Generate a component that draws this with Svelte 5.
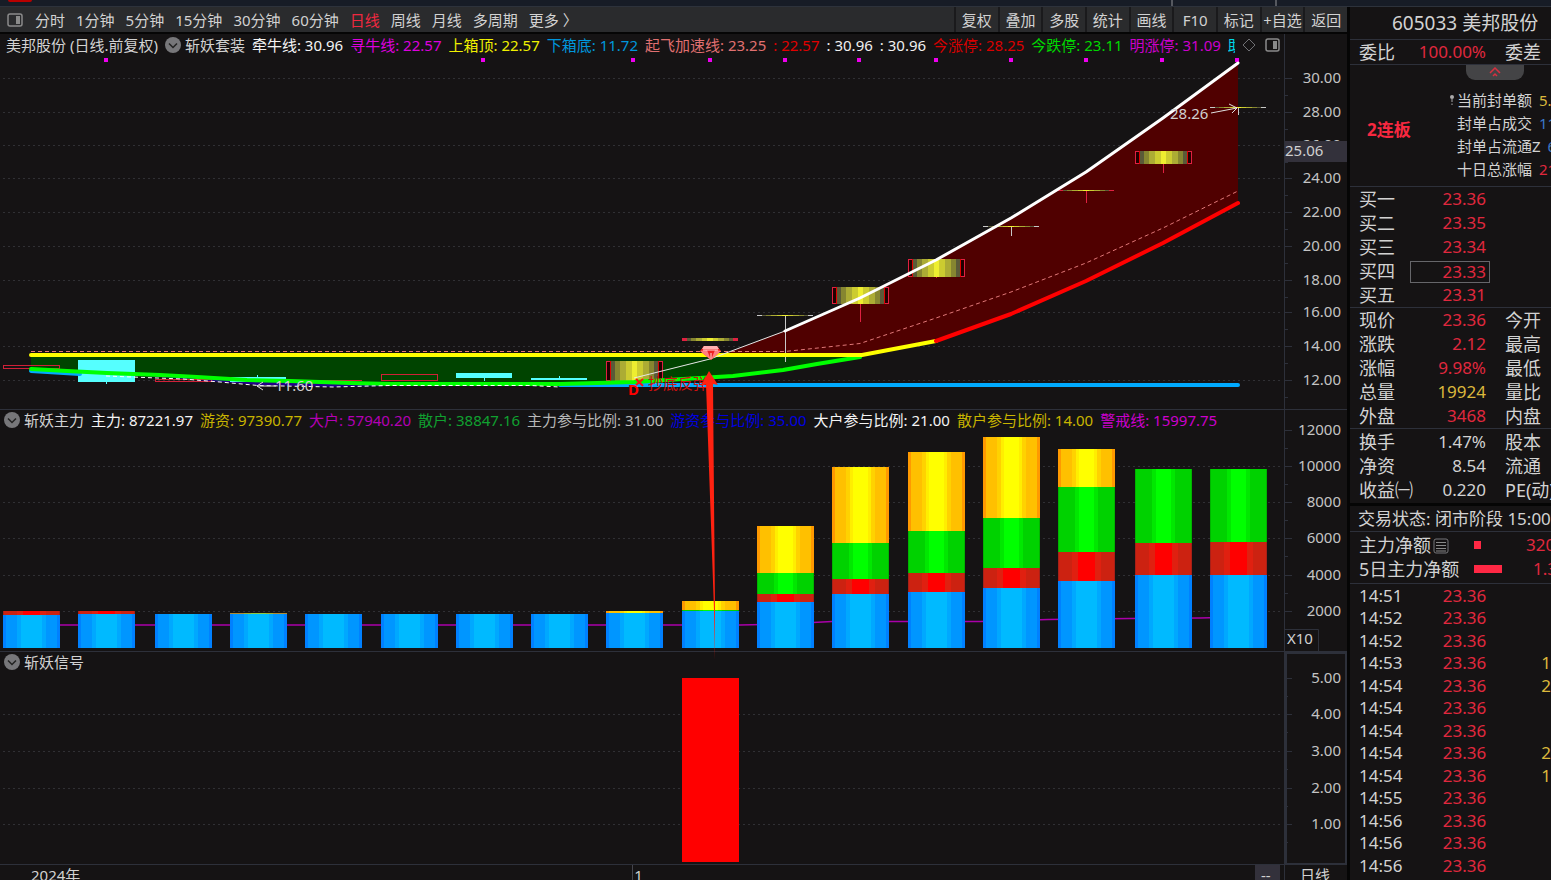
<script lang="ts">
    const periods = ["分时", "1分钟", "5分钟", "15分钟", "30分钟", "60分钟", "日线", "周线", "月线", "多周期", "更多 〉"];
    const tools = ["复权", "叠加", "多股", "统计", "画线", "F10", "标记", "+自选", "返回"];

    let period = $state("日线");

    const mainLegend = [
        { text: "牵牛线: 30.96", color: "#f4f4f4" },
        { text: "寻牛线: 22.57", color: "#dd00dd" },
        { text: "上箱顶: 22.57", color: "#f0f000" },
        { text: "下箱底: 11.72", color: "#0096dc" },
        { text: "起飞加速线: 23.25", color: "#e07070" },
        { text: ": 22.57", color: "#e00000" },
        { text: ": 30.96", color: "#f0f0f0" },
        { text: ": 30.96", color: "#f0f0f0" },
        { text: "今涨停: 28.25", color: "#d80000" },
        { text: "今跌停: 23.11", color: "#00d800" },
        { text: "明涨停: 31.09", color: "#cc00cc" },
    ];
    const forceLegend = [
        { text: "主力: 87221.97", color: "#f4f4f4" },
        { text: "游资: 97390.77", color: "#c8b400" },
        { text: "大户: 57940.20", color: "#b400b4" },
        { text: "散户: 38847.16", color: "#10a030" },
        { text: "主力参与比例: 31.00", color: "#b8b8b8" },
        { text: "游资参与比例: 35.00", color: "#0000e0" },
        { text: "大户参与比例: 21.00", color: "#f4f4f4" },
        { text: "散户参与比例: 14.00", color: "#c8b400" },
        { text: "警戒线: 15997.75", color: "#cc00cc" },
    ];

    const priceAxis = [
        ["30.00", 78], ["28.00", 112], ["26.00", 145], ["24.00", 178], ["22.00", 212],
        ["20.00", 246], ["18.00", 280], ["16.00", 312], ["14.00", 346], ["12.00", 380],
    ] as [string, number][];
    const forceAxis = [
        ["12000", 430], ["10000", 466], ["8000", 502], ["6000", 538], ["4000", 575], ["2000", 611],
    ] as [string, number][];
    const signalAxis = [
        ["5.00", 678], ["4.00", 714], ["3.00", 751], ["2.00", 788], ["1.00", 824],
    ] as [string, number][];

    const marks = [106, 483, 633, 710, 785, 859, 936, 1011, 1086, 1162, 1237];

    // limit-up candles: x, top, bottom, end of lower wick
    const goldCandles = [
        { x: 606, top: 361, bottom: 381, wick: 381 },
        { x: 832, top: 287, bottom: 304, wick: 322 },
        { x: 908, top: 259, bottom: 277, wick: 278 },
        { x: 1135, top: 151, bottom: 164, wick: 173 },
    ];
    const flatCandles = [
        { x: 682, y: 338, h: 3, wick: 341, color: "#e02040" },
        { x: 757, y: 315, h: 1, wick: 362, color: "#c8c8c8" },
        { x: 983, y: 226, h: 1, wick: 236, color: "#c8c8c8" },
        { x: 1058, y: 190, h: 1, wick: 203, color: "#e02040" },
        { x: 1210, y: 107, h: 1, wick: 115, color: "#c8c8c8" },
    ];

    // stacked bars: x, then the top of each layer down to the baseline
    const BASE = 648;
    const bars = [
        { x: 3, red: 611, blue: 615 },
        { x: 78, red: 611, blue: 614 },
        { x: 155, blue: 614 },
        { x: 230, olive: 613, blue: 614 },
        { x: 305, blue: 614 },
        { x: 381, blue: 614 },
        { x: 456, blue: 614 },
        { x: 531, blue: 614 },
        { x: 606, yellow: 611, blue: 613 },
        { x: 682, yellow: 601, green: 610, blue: 611 },
        { x: 757, yellow: 526, green: 573, red: 594, blue: 602 },
        { x: 832, yellow: 467, green: 543, red: 579, blue: 594 },
        { x: 908, yellow: 452, green: 531, red: 573, blue: 592 },
        { x: 983, yellow: 437, green: 518, red: 568, blue: 588 },
        { x: 1058, yellow: 449, green: 487, red: 552, blue: 581 },
        { x: 1135, green: 469, red: 543, blue: 575 },
        { x: 1210, green: 469, red: 542, blue: 575 },
    ];

    function layers(bar: any) {
        const kinds = ["olive", "yellow", "green", "red", "blue"].filter((k) => bar[k] !== undefined);
        return kinds.map((kind, i) => ({
            kind,
            y: bar[kind],
            h: (i + 1 < kinds.length ? bar[kinds[i + 1]] : BASE) - bar[kind],
        }));
    }

    // hard-edged colour steps, mirrored about the middle of the bar
    const gradients = {
        olive: [[0, "#b08a30"], [24, "#a0b030"], [36, "#90c840"]],
        yellow: [[0, "#ff9900"], [6, "#ffc000"], [24, "#ffd200"], [32, "#ffee00"], [36, "#ffff00"]],
        green: [[0, "#00b400"], [2, "#00d200"], [30, "#00e800"], [36, "#00ff00"]],
        red: [[0, "#a82018"], [2, "#cc2211"], [24, "#e02010"], [35, "#ff0000"]],
        blue: [[0, "#0080ff"], [6, "#0096ff"], [24, "#00a8ff"], [32, "#00baff"]],
        gold: [[0, "#5a5a38"], [8, "#868630"], [20, "#acac34"], [32, "#cccc30"], [44, "#eeee30"]],
    } as Record<string, [number, string][]>;

    function stops(steps: [number, string][]) {
        const half = steps.flatMap(([at, color], i) => [
            { at, color },
            { at: i + 1 < steps.length ? steps[i + 1][0] : 50, color },
        ]);
        return [...half, ...half.map((s) => ({ at: 100 - s.at, color: s.color })).reverse()];
    }

    const bids = [["买一", "23.36"], ["买二", "23.35"], ["买三", "23.34"], ["买四", "23.33"], ["买五", "23.31"]];
    const quotes = [
        ["现价", "23.36", "今开", "up"],
        ["涨跌", "2.12", "最高", "up"],
        ["涨幅", "9.98%", "最低", "up"],
        ["总量", "19924", "量比", "gold"],
        ["外盘", "3468", "内盘", "up"],
    ];
    const basics = [
        ["换手", "1.47%", "股本"],
        ["净资", "8.54", "流通"],
        ["收益㈠", "0.220", "PE(动)"],
    ];
    const sealed = [
        ["当前封单额", "5.", "gold"],
        ["封单占成交", "11", "blue"],
        ["封单占流通Z", "6", "blue"],
        ["十日总涨幅", "21", "up"],
    ];
    const ticks = [
        ["14:51", ""], ["14:52", ""], ["14:52", ""], ["14:53", "1"], ["14:54", "2"], ["14:54", ""], ["14:54", ""],
        ["14:54", "2"], ["14:54", "1"], ["14:55", ""], ["14:56", ""], ["14:56", ""], ["14:56", ""],
    ];
</script>

{#snippet chevron()}
    <svg class="chevron" viewBox="0 0 16 16" aria-hidden="true">
        <circle cx="8" cy="8" r="8" fill="#77777a" />
        <path d="M4 6.500L8 10.500L12 6.500" fill="none" stroke="#222" stroke-width="1.500" />
    </svg>
{/snippet}

{#snippet axis(rows: [string, number][], step: number, skip: string)}
    {#each rows as [label, y]}
        {#if label !== skip}
            <line class="grid" x1="3" x2="1282" y1={y + 0.5} y2={y + 0.5} />
        {/if}
        <path class="frame" d="M1285 {y + 0.5}h7M1285 {y + step + 0.5}h3" />
        <text class="tick" x="1341" y={y + 5}>{label}</text>
    {/each}
{/snippet}

<div class="app">
    <div class="strip"><span class="tab"></span><span class="sep"></span><span class="sep"></span></div>
    <div class="body">
        <main class="left">
            <nav class="toolbar">
                <svg class="panel-icon" viewBox="0 0 16 14" aria-hidden="true">
                    <rect x="1" y="1" width="14" height="12" rx="2" fill="none" stroke="#8a8a8a" stroke-width="1.500" />
                    <rect x="9" y="3" width="4" height="8" fill="#8a8a8a" />
                </svg>
                <div class="periods">
                    {#each periods as p}
                        <button class:active={p === period} onclick={() => (period = p)}>{p}</button>
                    {/each}
                </div>
                <div class="tools">
                    {#each tools as t}
                        <button>{t}</button>
                    {/each}
                </div>
            </nav>

            <div class="charts">
                <section class="pane">
                    <svg class="plot" viewBox="0 34 1347 376">
                        <defs>
                            {#each Object.entries(gradients) as [name, steps]}
                                <linearGradient id={name}>
                                    {#each stops(steps) as s}
                                        <stop offset="{s.at}%" stop-color={s.color} />
                                    {/each}
                                </linearGradient>
                            {/each}
                        </defs>
                        {@render axis(priceAxis, 17, "")}
                        <path class="frame" d="M0 409.500H1347M1284.500 34V410" />
                        <rect x="1285" y="141" width="62" height="21" fill="#33313b" />
                        <text class="label" x="1285" y="156">25.06</text>

                        <!-- box and breakout areas -->
                        <path fill="#004400" d="M31 355H860L817 364L783 370L733 376L634 382L560 384H390L350 383L290 381L247 380L197 377L160 375L107 373L67 371L31 369Z" />
                        <path fill="#220088" d="M140 375L197 377L247 380L290 381L350 383L390 384V386L333 387L258 385L183 379Z" />
                        <path fill="#500000" d="M722 355L785 331L860 298L936 260L1011 218L1086 172L1163 118L1238 63V203L1163 243L1086 281L1011 314L936 341L862 355Z" />

                        <g shape-rendering="crispEdges">
                            <rect x="78" y="360" width="57" height="22" fill="#55ffff" />
                            <path fill="#55ffff" d="M106 382h1v2h-1zM230 377h56v5h-56zM257 375h1v2h-1zM456 373h56v5h-56zM484 378h1v3h-1zM531 378h56v2h-56zM559 376h1v2h-1z" />
                            <path fill="none" stroke="#d02038" d="M3.500 365.500h56v3h-56zM155.500 379.500h56v2h-56zM305.500 380.500h56M381.500 374.500h56v6h-56z" />
                            {#each marks as x}
                                <rect x={x - 2} y="58" width="4" height="4" fill="#ee00ee" />
                            {/each}
                            {#each goldCandles as c}
                                <rect x={c.x + 0.5} y={c.top + 0.5} width="56" height={c.bottom - c.top - 1} fill="#200000" stroke="#e02040" />
                                <rect x={c.x + 4} y={c.top} width="49" height={c.bottom - c.top} fill="#e00000" />
                                <rect x={c.x + 5} y={c.top} width="47" height={c.bottom - c.top} fill="url(#gold)" />
                                <rect x={c.x + 28} y={c.bottom} width="1" height={c.wick - c.bottom} fill="#e02040" />
                            {/each}
                            {#each flatCandles as c}
                                <rect x={c.x} y={c.y} width="56" height={c.h} fill={c.color} />
                                <rect x={c.x + 5} y={c.y} width="46" height={c.h} fill="url(#gold)" />
                                <rect x={c.x + 28} y={c.y + c.h} width="1" height={c.wick - c.y - c.h} fill={c.color} />
                            {/each}
                        </g>

                        <path class="dash" stroke="#e07878" d="M31 351.500H785L860 343.500L936 318L1011 292L1086 263L1163 228L1238 191" />
                        <path class="line" stroke="#00aaff" d="M31 371L80 374M560 385H1238" />
                        <path class="line" stroke="#00ff00" d="M31 369L67 371L107 373L160 375L197 377L247 380L290 381L350 383L390 384H560L634 382L733 376L783 370L817 364L860 357" />
                        <path class="dash" stroke="#ffffff" d="M106 376L183 379L220 382L258 385.500L333 387L390 385.500H530L560 387" />
                        <path class="line" stroke="#ffff00" d="M31 355H862L936 341" />
                        <path class="line" stroke="#ff0000" d="M936 341L1011 314L1086 281L1163 243L1238 203" />
                        <path fill="none" stroke="#e8e8e8" d="M634 378L710 359L785 331" />
                        <path class="line thin" stroke="#ffffff" d="M785 331L860 298L936 260L1011 218L1086 172L1163 118L1238 63" />

                        <path fill="none" stroke="#e0e0e0" d="M276 386H257M263 382L257 386L263 390M1211 113L1237 108M1229 104L1237 108L1232 113" />
                        <text class="label" x="275" y="391">11.60</text>
                        <text class="label" x="1170" y="119">28.26</text>
                        <path fill="none" stroke="#ff1010" stroke-width="2" d="M636 379L643 386M643 379L636 385" />
                        <text class="signal" x="648" y="389">抄底反弹</text>
                        <text class="signal bold" x="628" y="395">D</text>

                        <!-- gem -->
                        <path fill="#ee2222" d="M704 346H717L721 351L711 360L700 351Z" />
                        <path fill="#ffb0b0" d="M704 346H717L719 349H702Z" />
                        <path fill="#ff8080" d="M700 351L707 350L711 360ZM715 350L721 351L711 360Z" />
                        <path fill="none" stroke="#ffe0e0" d="M703 350H718M711 353V359" />
                    </svg>
                    <header class="legend main-legend">
                        <span>美邦股份 (日线.前复权)</span>
                        {@render chevron()}
                        <span class="name">斩妖套装</span>
                        {#each mainLegend as item}
                            <span style:color={item.color}>{item.text}</span>
                        {/each}
                        <span class="cut">助</span>
                        <svg class="tail" viewBox="0 0 38 16" aria-hidden="true">
                            <path d="M7 2L13 8L7 14L1 8Z" fill="none" stroke="#707074" />
                            <rect x="24" y="2" width="13" height="12" rx="2" fill="none" stroke="#8a8a8a" stroke-width="1.500" />
                            <rect x="31" y="4" width="4" height="8" fill="#8a8a8a" />
                        </svg>
                    </header>
                </section>

                <section class="pane">
                    <svg class="plot" viewBox="0 410 1347 242">
                        {@render axis(forceAxis, 18, "12000")}
                        <path class="frame" d="M0 651.500H1347M1284.500 410V652M1285 629.500H1318.500V652" />
                        <text class="label" x="1287" y="644">X10</text>
                        <path fill="none" stroke="#aa00aa" stroke-width="1.500" d="M31 625H740L785 624L813 622.500L832 621.500H980L1048 619.500L1130 618.500L1200 618L1238 617" />
                        <g shape-rendering="crispEdges">
                            {#each bars as bar}
                                {#each layers(bar) as l}
                                    <rect x={bar.x} y={l.y} width="57" height={l.h} fill="url(#{l.kind})" />
                                {/each}
                            {/each}
                        </g>
                    </svg>
                    <header class="legend">
                        {@render chevron()}
                        <span class="name">斩妖主力</span>
                        {#each forceLegend as item}
                            <span style:color={item.color}>{item.text}</span>
                        {/each}
                    </header>
                </section>

                <section class="pane">
                    <svg class="plot" viewBox="0 652 1347 213">
                        {@render axis(signalAxis, 18, "5.00")}
                        <path class="frame" d="M0 864.500H1347M1284.500 652V865" />
                        <rect x="1286" y="653" width="60" height="211" fill="none" stroke="#2d303a" stroke-width="2" />
                        <rect x="682" y="678" width="57" height="184" fill="#ff0000" />
                    </svg>
                    <header class="legend">
                        {@render chevron()}
                        <span class="name">斩妖信号</span>
                    </header>
                </section>

                <!-- pointer from the signal bar up to the breakout candle -->
                <svg class="pointer" viewBox="0 34 1347 831" aria-hidden="true">
                    <path fill="#ff2211" d="M709 371L718 385L713 384L715 610L714.500 660L714 610L706 384L701 386Z" />
                </svg>
            </div>

            <footer class="timeline">
                <span class="year">2024年</span>
                <span class="month">1</span>
                <span class="cursor">--</span>
                <span class="unit">日线</span>
            </footer>
        </main>

        <aside class="side">
            <h1>605033 美邦股份</h1>
            <table class="rows ratio">
                <tbody><tr><th>委比</th><td class="up">100.00%</td><th class="second">委差</th></tr></tbody>
            </table>
            <div class="seal">
                <button class="fold" aria-label="收起">
                    <svg viewBox="0 0 12 10" aria-hidden="true">
                        <path d="M1 6L6 1L11 6M4 9L6 7L8 9" fill="none" stroke="#d83040" stroke-width="1.500" />
                    </svg>
                </button>
                <strong>2连板</strong>
                <ul>
                    {#each sealed as [label, value, tone], i}
                        <li>
                            <span class="pin">
                                {#if i === 0}
                                    <svg viewBox="0 0 4 12" aria-hidden="true">
                                        <circle cx="2" cy="3" r="2" fill="#aaa" />
                                        <path d="M2 5V8M2 9.500V11" stroke="#aaa" />
                                    </svg>
                                {/if}
                            </span>{label}<span class="num {tone}">{value}</span>
                        </li>
                    {/each}
                </ul>
            </div>
            <table class="rows">
                <tbody>
                    {#each bids as [label, price], i}
                        <tr><th>{label}</th><td class="up"><span class:picked={i === 3}>{price}</span></td><td></td></tr>
                    {/each}
                </tbody>
            </table>
            <table class="rows">
                <tbody>
                    {#each quotes as [label, value, other, tone]}
                        <tr><th>{label}</th><td class={tone}>{value}</td><th class="second">{other}</th></tr>
                    {/each}
                </tbody>
            </table>
            <table class="rows basics">
                <tbody>
                    {#each basics as [label, value, other]}
                        <tr><th>{label}</th><td>{value}</td><th class="second">{other}</th></tr>
                    {/each}
                </tbody>
            </table>
            <p class="status">交易状态: 闭市阶段 15:00</p>
            <div class="flows">
                <div class="flow">
                    <span class="flow-name">主力净额<svg viewBox="0 0 16 16" aria-hidden="true">
                            <rect x="1" y="1" width="14" height="14" rx="2" fill="none" stroke="#77777a" />
                            <path d="M3 4.500H13M3 7.500H13M3 10.500H13M3 13H13" stroke="#8a8a8a" />
                        </svg></span>
                    <span class="meter"><i style:width="7px"></i></span>
                    <span class="up">320</span>
                </div>
                <div class="flow">
                    <span class="flow-name">5日主力净额</span>
                    <span class="meter"><i style:width="28px"></i></span>
                    <span class="up low">1.3</span>
                </div>
            </div>
            <table class="ticks">
                <tbody>
                    {#each ticks as [time, volume]}
                        <tr><td>{time}</td><td class="price up">23.36</td><td class="volume gold">{volume}</td></tr>
                    {/each}
                </tbody>
            </table>
        </aside>
    </div>
</div>

<style>
    :global(body) {
        background: #151314;
    }

    .app {
        display: flex;
        flex-direction: column;
        height: 100vh;
        overflow: hidden;
        color: #d2d2d2;
        font: 15px/20px "Noto Sans", "Noto Sans CJK SC", sans-serif;
        white-space: nowrap;
    }

    button {
        padding: 0;
        border: 0;
        background: none;
        color: inherit;
        font: inherit;
    }

    .strip {
        display: flex;
        flex: none;
        box-sizing: border-box;
        height: 7px;
        padding: 0 274px 0 8px;
        background: #171c26;
        border-bottom: 1px solid #2d323b;
    }

    .tab {
        width: 24px;
        height: 2px;
        margin-right: auto;
        border-radius: 0 0 3px 3px;
        background: #b80000;
    }

    .sep {
        width: 2px;
        margin-left: 102px;
        background: #55585f;
    }

    .body {
        display: flex;
        flex: 1;
        min-height: 0;
    }

    .left {
        flex: 1;
        min-width: 0;
    }

    .toolbar {
        display: flex;
        align-items: center;
        height: 25px;
        padding-left: 7px;
        background: #2a2b2d;
        border-bottom: 2px solid #050505;
    }

    .panel-icon {
        width: 16px;
        height: 14px;
    }

    .periods {
        display: flex;
        gap: 11px;
        margin-left: 12px;
    }

    .active {
        color: #f02840;
    }

    .tools {
        display: grid;
        grid-template-columns: repeat(9, 1fr);
        width: 393px;
        height: 25px;
        margin-left: auto;
    }

    .tools button {
        min-width: 0;
        border-left: 2px solid #1a1a1c;
    }

    .charts {
        position: relative;
    }

    .pane {
        display: grid;
    }

    .plot,
    .legend {
        grid-area: 1 / 1;
        min-width: 0;
    }

    .plot {
        display: block;
        width: 100%;
    }

    .legend {
        display: flex;
        align-items: center;
        align-self: start;
        gap: 7px;
        height: 20px;
        padding: 0 67px 0 4px;
    }

    .main-legend {
        height: 22px;
        padding-left: 6px;
    }

    .chevron {
        flex: none;
        width: 16px;
        height: 16px;
    }

    .legend .name {
        margin-left: -3px;
    }

    .cut {
        flex: 1;
        max-width: 10px;
        overflow: hidden;
        color: #00d8e8;
    }

    .tail {
        flex: none;
        width: 38px;
        height: 16px;
        margin-left: auto;
    }

    .grid {
        stroke: #303034;
        stroke-dasharray: 2 3;
    }

    .frame {
        fill: none;
        stroke: #2d303a;
    }

    .tick {
        fill: #c4c4c4;
        text-anchor: end;
    }

    .label {
        fill: #d0d0d0;
    }

    .signal {
        fill: #d01010;
    }

    .bold {
        fill: #ff0000;
        font-weight: 700;
    }

    .line {
        fill: none;
        stroke-width: 4;
        stroke-linejoin: round;
        stroke-linecap: round;
    }

    .thin {
        stroke-width: 3;
    }

    .dash {
        fill: none;
        stroke-dasharray: 4 3;
    }

    .pointer {
        position: absolute;
        inset: 0;
        width: 100%;
        pointer-events: none;
    }

    .timeline {
        display: flex;
        height: 20px;
    }

    .year {
        width: 45%;
        padding-left: 31px;
    }

    .month {
        flex: 1;
        margin-left: -5px;
        border-left: 1px solid #44444c;
        padding-left: 1px;
    }

    .cursor {
        width: 19px;
        padding-left: 6px;
        background: #33313b;
    }

    .unit {
        width: 47px;
        margin-left: 4px;
        border-left: 1px solid #2d303a;
        padding-left: 15px;
    }

    .side {
        flex: none;
        box-sizing: border-box;
        width: 204px;
        overflow: hidden;
        border-left: 3px solid #050505;
        font-size: 17px;
        line-height: 24px;
    }

    h1 {
        margin: 0;
        padding-left: 42px;
        border-bottom: 1px solid #2d303a;
        font-size: 19px;
        font-weight: 400;
        line-height: 32px;
    }

    .rows {
        width: 100%;
        border-bottom: 1px solid #2d303a;
        border-spacing: 0;
        table-layout: fixed;
    }

    .rows th,
    .rows td {
        height: 24px;
        padding: 0;
    }

    .rows th {
        width: 50px;
        padding-left: 9px;
        font-size: 18px;
        font-weight: 400;
        text-align: left;
    }

    .rows td:nth-child(2) {
        width: 77px;
        text-align: right;
    }

    .rows .second {
        width: auto;
        padding-left: 19px;
    }

    .rows .picked {
        display: inline-block;
        box-sizing: border-box;
        width: 80px;
        height: 22px;
        margin: 0 -4px 0 -20px;
        padding-right: 3px;
        border: 1px solid #66666a;
        line-height: 20px;
        vertical-align: middle;
    }

    .up {
        color: #e0283e;
    }

    .gold {
        color: #dcb83c;
    }

    .blue {
        color: #3c78c8;
    }

    .seal {
        display: grid;
        grid-template-columns: 98px 1fr;
        align-items: center;
        border-bottom: 1px solid #2d303a;
        font-size: 15px;
    }

    .fold {
        grid-column: 1 / -1;
        width: 58px;
        height: 15px;
        margin-left: 116px;
        border-radius: 0 0 9px 9px;
        background: #444446;
    }

    .fold svg {
        display: block;
        width: 12px;
        height: 10px;
        margin: 0 auto 2px;
    }

    .seal strong {
        padding: 0 0 6px 17px;
        color: #f82840;
        font-size: 17px;
    }

    .seal ul {
        margin: 0;
        padding: 9px 0 6px;
        list-style: none;
    }

    .seal li {
        line-height: 23px;
    }

    .seal li:last-child {
        line-height: 22px;
    }

    .pin {
        display: inline-block;
        width: 9px;
    }

    .pin svg {
        display: block;
        width: 4px;
        height: 12px;
        margin-left: 2px;
    }

    .num {
        margin-left: 7px;
    }

    .basics {
        padding: 1px 0;
        border-bottom: 3px solid #050505;
    }

    .status {
        margin: 0;
        padding-left: 8px;
        border-bottom: 1px solid #2d303a;
        line-height: 25px;
    }

    .flows {
        padding: 1px 0 2px 9px;
        border-bottom: 1px solid #2d303a;
    }

    .flow {
        display: grid;
        grid-template-columns: 115px 52px 1fr;
        align-items: center;
        height: 24px;
    }

    .flow-name {
        font-size: 18px;
    }

    .flow-name svg {
        width: 16px;
        height: 16px;
        margin-left: 2px;
        vertical-align: -2px;
    }

    .meter i {
        display: block;
        height: 8px;
        background: #ff2844;
    }

    .low {
        padding-left: 7px;
    }

    .ticks {
        border-spacing: 0;
    }

    .ticks td {
        height: 23px;
        padding: 0;
        line-height: 22px;
    }

    .ticks tr:nth-child(even) td {
        height: 22px;
    }

    .ticks td:first-child {
        width: 50px;
        padding-left: 9px;
    }

    .ticks .price {
        width: 81px;
        text-align: right;
    }

    .ticks .price + .volume {
        padding-left: 55px;
    }

    .ticks td:first-child {
        padding-right: 4px;
    }
</style>
